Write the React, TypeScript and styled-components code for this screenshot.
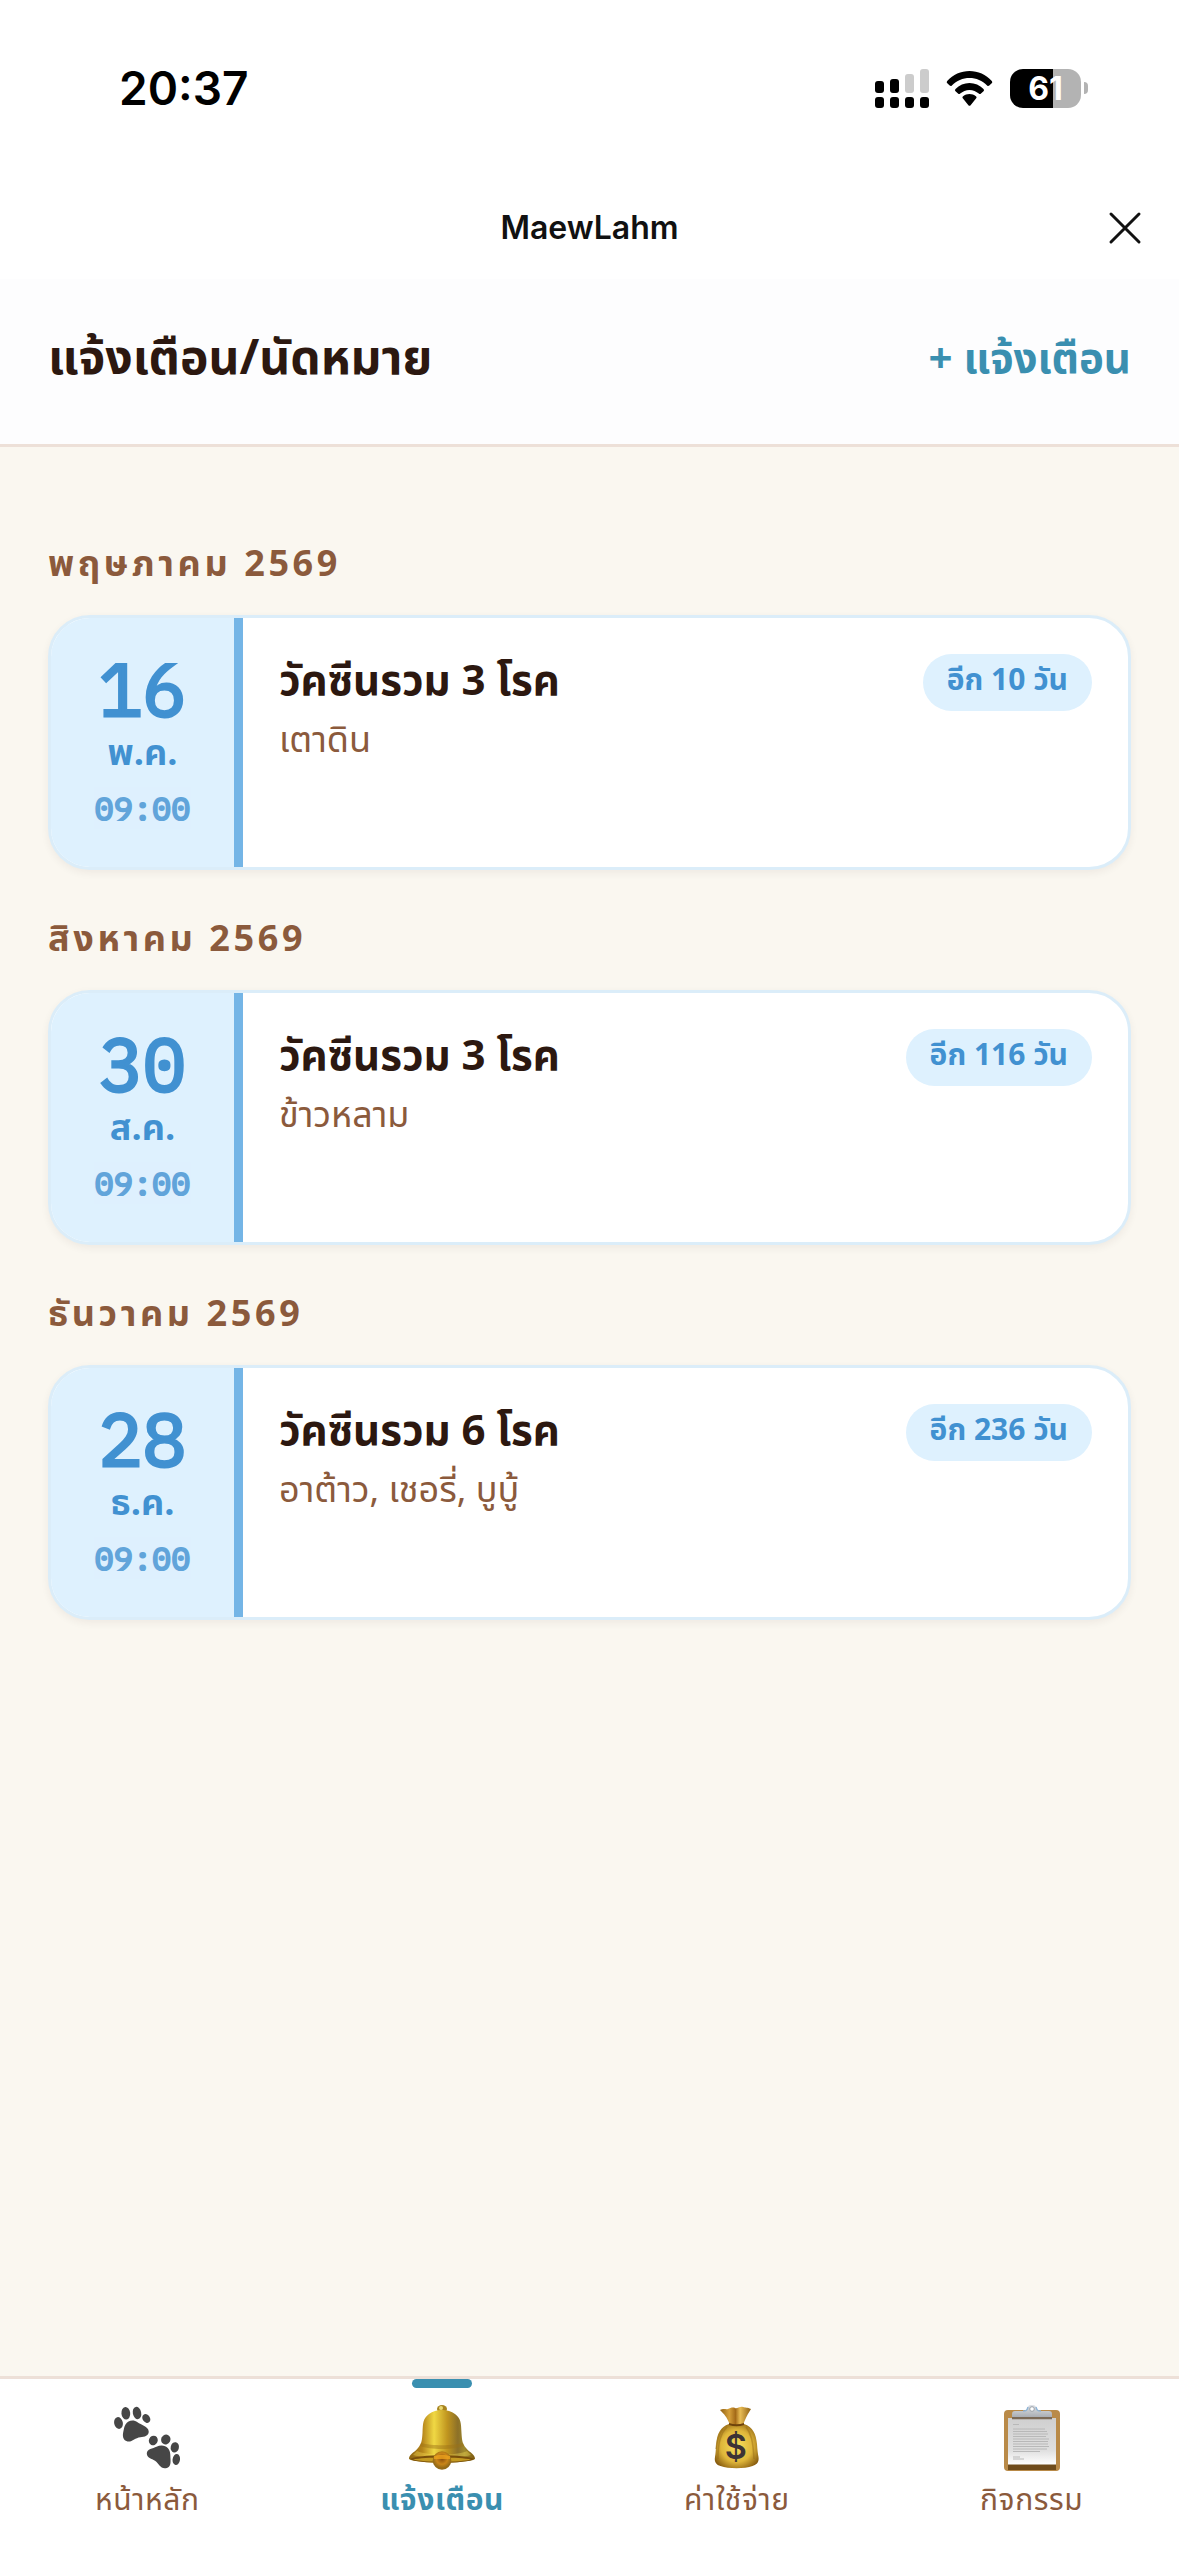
import React from "react";
import styled, { createGlobalStyle } from "styled-components";

const color = {
  ink: "#2c1810",
  brown: "#8b5a3c",
  teal: "#3a8fb0",
  blue: "#4191d1",
  sky: "#74b5e6",
  pale: "#def1fe",
  cardLine: "#dbedf9",
  line: "#ede0d8",
  page: "#faf7f0",
};

const thai = `"Noto Sans Thai", "Noto Sans", "Open Sans", sans-serif`;
const mono = `"IBM Plex Mono", "Liberation Mono", monospace`;

const GlobalStyle = createGlobalStyle`
  *, *::before, *::after { box-sizing: border-box; }
  body { margin: 0; background: ${color.page}; font-family: ${thai}; color: ${color.ink}; }
  h1, h2, h3, p { margin: 0; }
  button { border: 0; padding: 0; background: none; font: inherit; color: inherit; cursor: pointer; }
`;

const Screen = styled.div`
  display: flex;
  flex-direction: column;
  min-height: 100vh;
`;

const StatusBar = styled.div`
  display: flex;
  align-items: center;
  justify-content: space-between;
  height: 176px;
  padding: 0 91px 0 119px;
  background: #fff;
  color: #000;
  font-family: Inter, sans-serif;
`;

const Clock = styled.time`
  font-size: 46px;
  font-weight: 600;
  line-height: 60px;
`;

const StatusIcons = styled.div`
  display: flex;
  align-items: center;
  gap: 17px;
`;

const BatteryWrap = styled.div`
  display: flex;
  align-items: center;
  gap: 3px;
`;

const BatteryBody = styled.div<{ $level: number }>`
  display: flex;
  align-items: center;
  justify-content: center;
  width: 71px;
  height: 39px;
  border-radius: 13px;
  background: linear-gradient(90deg, #000 ${(p) => p.$level}%, #b3b3b3 ${(p) => p.$level}%);
  color: #fff;
  font-size: 32px;
  font-weight: 700;
  line-height: 39px;
`;

const BatteryTip = styled.div`
  width: 4px;
  height: 12px;
  border-radius: 0 6px 6px 0;
  background: #b3b3b3;
`;

const AppBar = styled.div`
  display: grid;
  grid-template-columns: 1fr auto 1fr;
  align-items: center;
  height: 103px;
  padding: 0 36px;
  background: #fff;
`;

const AppName = styled.p`
  grid-column: 2;
  font-family: Inter, sans-serif;
  font-size: 32px;
  font-weight: 600;
  line-height: 48px;
  color: #111;
`;

const CloseButton = styled.button`
  justify-self: end;
  display: flex;
`;

const PageHeader = styled.header`
  display: flex;
  align-items: center;
  justify-content: space-between;
  height: 168px;
  padding: 0 48px 4px;
  border-bottom: 3px solid ${color.line};
  background: #fdfdfe;
`;

const PageTitle = styled.h1`
  font-size: 48px;
  font-weight: 700;
  line-height: 72px;
`;

const AddButton = styled.button`
  font-size: 42px;
  font-weight: 700;
  line-height: 72px;
  color: ${color.teal};
`;

const Main = styled.main`
  display: flex;
  flex: 1;
  flex-direction: column;
  gap: 42px;
  padding: 90px 48px;
`;

const MonthGroup = styled.section`
  display: flex;
  flex-direction: column;
  gap: 21px;
`;

const MonthTitle = styled.h2`
  font-size: 36px;
  font-weight: 700;
  line-height: 57px;
  letter-spacing: 0.1em;
  color: ${color.brown};
`;

const Card = styled.article`
  display: flex;
  min-height: 255px;
  overflow: hidden;
  border: 3px solid ${color.cardLine};
  border-radius: 42px;
  background: #fff;
  box-shadow: 0 3px 9px rgba(44, 24, 16, 0.06);
`;

const DateColumn = styled.div`
  display: flex;
  flex: 0 0 192px;
  flex-direction: column;
  align-items: center;
  padding-top: 33px;
  border-right: 9px solid ${color.sky};
  background: ${color.pale};
  color: ${color.blue};
`;

const Day = styled.span`
  font-family: ${mono};
  font-size: 73px;
  line-height: 76px;
  -webkit-text-stroke: 3px currentColor;
`;

const MonthShort = styled.span`
  font-size: 36px;
  font-weight: 700;
  line-height: 54px;
`;

const Time = styled.time`
  font-family: ${mono};
  font-size: 32px;
  line-height: 54px;
  -webkit-text-stroke: 2px currentColor;
  opacity: 0.8;
`;

const CardBody = styled.div`
  display: flex;
  flex: 1;
  align-items: flex-start;
  justify-content: space-between;
  gap: 24px;
  padding: 36px;
`;

const EventText = styled.div`
  min-width: 0;
`;

const EventTitle = styled.h3`
  font-size: 42px;
  font-weight: 700;
  line-height: 57px;
`;

const PetNames = styled.p`
  font-size: 36px;
  line-height: 60px;
  color: ${color.brown};
`;

const Badge = styled.span`
  flex: none;
  padding: 0 24px 2px;
  border-radius: 30px;
  background: ${color.pale};
  font-size: 30px;
  font-weight: 700;
  line-height: 55px;
  color: ${color.blue};
`;

const TabBar = styled.nav`
  display: grid;
  grid-template-columns: repeat(4, 1fr);
  height: 180px;
  border-top: 3px solid ${color.line};
  background: #fff;
`;

const Tab = styled.a<{ $active: boolean }>`
  position: relative;
  display: flex;
  flex-direction: column;
  align-items: center;
  padding-top: 26px;
  font-size: 30px;
  font-weight: ${(p) => (p.$active ? 700 : 400)};
  line-height: 48px;
  letter-spacing: 0.02em;
  text-decoration: none;
  color: ${(p) => (p.$active ? color.teal : color.brown)};

  &::before {
    content: "";
    display: ${(p) => (p.$active ? "block" : "none")};
    position: absolute;
    top: 0;
    width: 60px;
    height: 9px;
    border-radius: 5px;
    background: ${color.teal};
  }

  svg {
    margin-bottom: 6px;
  }
`;

const Signal = () => (
  <svg width="54" height="39" viewBox="0 0 54 39" aria-hidden="true">
    <rect x="0" y="12" width="9" height="12" rx="3" />
    <rect x="15" y="10" width="9" height="14" rx="3" />
    <rect x="30" y="5" width="9" height="19" rx="3" fill="#ccc" />
    <rect x="45" y="0" width="9" height="24" rx="3" fill="#ccc" />
    {[0, 15, 30, 45].map((x) => (
      <rect key={x} x={x} y="28" width="9" height="11" rx="3" />
    ))}
  </svg>
);

const Wifi = () => (
  <svg width="47" height="35" viewBox="0 0 47 35" aria-hidden="true">
    <path d="M1.3 12.2a1.6 1.6 0 0 1-.1-2.3C7 3.600 15 0 23.500 0S40 3.600 45.800 9.900a1.600 1.600 0 0 1-.1 2.300l-2.400 2.300a1.600 1.600 0 0 1-2.200-.1C36.400 9.500 30.200 6.900 23.500 6.900S10.600 9.500 5.900 14.400a1.600 1.600 0 0 1-2.200.1z" />
    <path d="M9.500 20.200a1.600 1.600 0 0 1 0-2.300C13.200 14.200 18.200 12 23.500 12s10.300 2.200 14 5.900a1.600 1.600 0 0 1 0 2.300l-2.500 2.400a1.600 1.600 0 0 1-2.200 0c-2.500-2.300-5.800-3.700-9.300-3.700s-6.800 1.400-9.300 3.700a1.600 1.600 0 0 1-2.200 0z" />
    <path d="M17 27.500a1.500 1.500 0 0 1 .1-2.200c1.700-1.400 4-2.200 6.400-2.200s4.700.8 6.400 2.200a1.500 1.500 0 0 1 .1 2.200l-5.400 6.700a1.500 1.500 0 0 1-2.200 0z" />
  </svg>
);

const CloseIcon = () => (
  <svg width="36" height="36" viewBox="0 0 36 36" fill="none" stroke="#111" strokeWidth="3" strokeLinecap="round" aria-hidden="true">
    <path d="M4 4l28 28M32 4L4 32" />
  </svg>
);

const PawIcon = () => (
  <svg width="66" height="66" viewBox="0 0 66 66" fill="#464646" aria-hidden="true">
    <ellipse cx="4.500" cy="18" rx="4.300" ry="6" transform="rotate(-12 4.500 18)" />
    <ellipse cx="11.800" cy="8.300" rx="4.400" ry="6.300" transform="rotate(-6 11.800 8.300)" />
    <ellipse cx="23" cy="8" rx="4.200" ry="6.200" transform="rotate(-12 23 8)" />
    <ellipse cx="32.300" cy="13.500" rx="3.700" ry="4.700" transform="rotate(-35 32.300 13.500)" />
    <path d="M11.500 19.500c2.500-4.200 8-5.200 12-2.300 3.500 2.500 10.800 4.300 11.200 9 .4 4.600-4.200 5.600-8.400 6-5.300.6-8.300 5.100-12.800 4.200-5-1-5-6-4.200-9.600.600-2.600.8-4.900 2.200-7.300z" />
    <ellipse cx="39.300" cy="35.500" rx="4.400" ry="4.900" transform="rotate(25 39.300 35.500)" />
    <ellipse cx="51.800" cy="34.500" rx="4.600" ry="5" transform="rotate(30 51.800 34.500)" />
    <ellipse cx="60.800" cy="42.300" rx="4.100" ry="5.200" transform="rotate(12 60.800 42.300)" />
    <ellipse cx="62.300" cy="54.500" rx="3.700" ry="5.500" transform="rotate(8 62.300 54.500)" />
    <path d="M42.500 41.800c4-1.900 8.700-1.600 11.500 1.500 2.700 3 2.300 7.200 2.500 10.700.2 4 .3 8.300-4.500 9.200-5.600 1-7-4.700-11-7.400-3.300-2.200-8.100-2.500-8.200-7.200 0-4.500 6.200-5.100 9.700-6.800z" />
  </svg>
);

const BellIcon = () => (
  <svg width="66" height="66" viewBox="0 0 66 66" aria-hidden="true">
    <defs>
      <linearGradient id="bellBody" x1="0" x2="1">
        <stop offset="0" stopColor="#8c6511" />
        <stop offset=".2" stopColor="#b5841a" />
        <stop offset=".38" stopColor="#f0d844" />
        <stop offset=".58" stopColor="#c0951f" />
        <stop offset=".74" stopColor="#8c7028" />
        <stop offset=".84" stopColor="#a08a2e" />
        <stop offset="1" stopColor="#7d5a10" />
      </linearGradient>
      <radialGradient id="bellClapper" cx=".5" cy=".4">
        <stop offset="0" stopColor="#8a4d0e" />
        <stop offset=".6" stopColor="#c98518" />
        <stop offset="1" stopColor="#946a17" />
      </radialGradient>
    </defs>
    <ellipse cx="33" cy="4" rx="5" ry="4" fill="#a88420" />
    <circle cx="32" cy="3" r="2" fill="#e9d873" />
    <path d="M0 54c0-5 5-6 9-11 4-5 4-8 4.500-15 .5-11 .5-14 6.500-19 3.500-2.600 8-4 13-4s9.500 1.400 13 4c6 5 6 8 6.500 19 .5 7 .5 10 4.500 15 4 5 9 6 9 11-8 5-58 5-66 0z" fill="url(#bellBody)" />
    <path d="M12 38c10 3 32 3 42 0l1 3c-10 4-34 4-44 0z" fill="#9b7016" opacity=".45" />
    <path d="M8 46c12 5 38 5 50 0l4 4c-14 4-44 4-58 0z" fill="#fbe65a" opacity=".35" />
    <path d="M1 54c9-5 55-5 64 0-9 5-55 5-64 0z" fill="#7a4f0b" />
    <path d="M4 54.500c12-2.800 46-2.800 58 0-10 3-48 3-58 0z" fill="#c49a22" />
    <circle cx="33" cy="55.500" r="9.300" fill="url(#bellClapper)" />
    <path d="M25 51c4-1.500 12-1.500 16 0v3H25z" fill="#f0a51e" opacity=".75" />
  </svg>
);

const MoneyIcon = () => (
  <svg width="66" height="66" viewBox="0 0 66 66" aria-hidden="true">
    <defs>
      <radialGradient id="bagBody" cx=".5" cy=".5" r=".6">
        <stop offset="0" stopColor="#f8df5c" />
        <stop offset=".6" stopColor="#dfb63a" />
        <stop offset="1" stopColor="#85590e" />
      </radialGradient>
      <linearGradient id="bagNeck" x1="0" x2="1">
        <stop offset="0" stopColor="#8f5f12" />
        <stop offset=".3" stopColor="#d6a03a" />
        <stop offset=".5" stopColor="#a46a18" />
        <stop offset=".65" stopColor="#e9bd55" />
        <stop offset="1" stopColor="#8f5f12" />
      </linearGradient>
    </defs>
    <path d="M25 19h15c9 3 12 10 13 20 .4 6 .8 9 1.500 13 1 6-3 8-6 9-8 3-24 3-32 0-4-1-6.500-4-5.500-9 .7-4 .8-7 1.200-13 .8-10 4-17 12.800-20z" fill="url(#bagBody)" />
    <path d="M16 5c4-2 6 0 8-1s5-2 7-1 5-2 8-1 4 0 8 2c-3 5-5 8-7.500 15-4 1.500-10 1.500-14 0C23 12 20 9 16 5z" fill="url(#bagNeck)" />
    <path d="M25 18c5 1.800 10 1.800 15 0v2c-5 1.800-10 1.800-15 0z" fill="#6e430c" />
    <path d="M23 22c-6 6-9 14-9 32M42 22c5 6 7 14 8 32M19 24c-4 5-6 11-7 20" fill="none" stroke="#9a6e18" strokeWidth="1.500" opacity=".5" />
    <text x="32" y="54" textAnchor="middle" fontFamily="Inter, sans-serif" fontSize="34" fontWeight="600" fill="#3d3335">$</text>
  </svg>
);

const ClipboardIcon = () => (
  <svg width="66" height="66" viewBox="0 0 66 66" aria-hidden="true">
    <defs>
      <linearGradient id="paper" x1="0" x2="0" y1="0" y2="1">
        <stop offset="0" stopColor="#cfcfcf" />
        <stop offset=".7" stopColor="#e0e0e0" />
        <stop offset="1" stopColor="#fff" />
      </linearGradient>
      <linearGradient id="clip" x1="0" x2="0" y1="0" y2="1">
        <stop offset="0" stopColor="#dfe3e8" />
        <stop offset="1" stopColor="#a9adb3" />
      </linearGradient>
    </defs>
    <rect x="5" y="5" width="56" height="61" rx="4" fill="#b98a48" />
    <path d="M9 59h48v6H9z" fill="#6f4c1c" />
    <path d="M9 13h48v46.500H9z" fill="url(#paper)" />
    <path d="M14 19.500h6M14 24h32M14 26.500h34M14 29h35M14 31.500h33M14 34h36M14 36.500h35M14 39h35M14 41.500h36M14 44h34M14 46.500h27M14 52h7M14 54h11" stroke="#b8b8b8" strokeWidth="1" />
    <path d="M13 12h40v2.200H13z" fill="#7b6a58" />
    <path d="M13 12V9c0-2 1-3 3-3h9c3 0 3-1.500 4-4s2.500-2 4-2 3 0 4 2 1 4 4 4h9c2 0 3 1 3 3v3z" fill="url(#clip)" />
    <path d="M24 6c4 0 4-1 5-4M42 6c-4 0-4-1-5-4" fill="none" stroke="#8fb4d6" strokeWidth="1.500" />
    <circle cx="33" cy="4" r="2.300" fill="#fff" stroke="#9aa0a8" strokeWidth="1" />
  </svg>
);

const months = [
  { title: "พฤษภาคม 2569", day: "16", short: "พ.ค.", time: "09:00", event: "วัคซีนรวม 3 โรค", pets: "เตาดิน", left: "อีก 10 วัน" },
  { title: "สิงหาคม 2569", day: "30", short: "ส.ค.", time: "09:00", event: "วัคซีนรวม 3 โรค", pets: "ข้าวหลาม", left: "อีก 116 วัน" },
  { title: "ธันวาคม 2569", day: "28", short: "ธ.ค.", time: "09:00", event: "วัคซีนรวม 6 โรค", pets: "อาต้าว, เชอรี่, บูบู้", left: "อีก 236 วัน" },
];

const tabs = [
  { label: "หน้าหลัก", Icon: PawIcon },
  { label: "แจ้งเตือน", Icon: BellIcon, active: true },
  { label: "ค่าใช้จ่าย", Icon: MoneyIcon },
  { label: "กิจกรรม", Icon: ClipboardIcon },
];

export default function App() {
  return (
    <>
      <GlobalStyle />
      <Screen lang="th">
        <StatusBar>
          <Clock>20:37</Clock>
          <StatusIcons>
            <Signal />
            <Wifi />
            <BatteryWrap>
              <BatteryBody $level={61}>61</BatteryBody>
              <BatteryTip />
            </BatteryWrap>
          </StatusIcons>
        </StatusBar>
        <AppBar>
          <AppName>MaewLahm</AppName>
          <CloseButton type="button" aria-label="ปิด">
            <CloseIcon />
          </CloseButton>
        </AppBar>
        <PageHeader>
          <PageTitle>แจ้งเตือน/นัดหมาย</PageTitle>
          <AddButton type="button">+ แจ้งเตือน</AddButton>
        </PageHeader>
        <Main>
          {months.map((m) => (
            <MonthGroup key={m.title}>
              <MonthTitle>{m.title}</MonthTitle>
              <Card>
                <DateColumn>
                  <Day>{m.day}</Day>
                  <MonthShort>{m.short}</MonthShort>
                  <Time>{m.time}</Time>
                </DateColumn>
                <CardBody>
                  <EventText>
                    <EventTitle>{m.event}</EventTitle>
                    <PetNames>{m.pets}</PetNames>
                  </EventText>
                  <Badge>{m.left}</Badge>
                </CardBody>
              </Card>
            </MonthGroup>
          ))}
        </Main>
        <TabBar>
          {tabs.map(({ label, Icon, active }) => (
            <Tab key={label} href="#" $active={!!active} aria-current={active ? "page" : undefined}>
              <Icon />
              {label}
            </Tab>
          ))}
        </TabBar>
      </Screen>
    </>
  );
}
